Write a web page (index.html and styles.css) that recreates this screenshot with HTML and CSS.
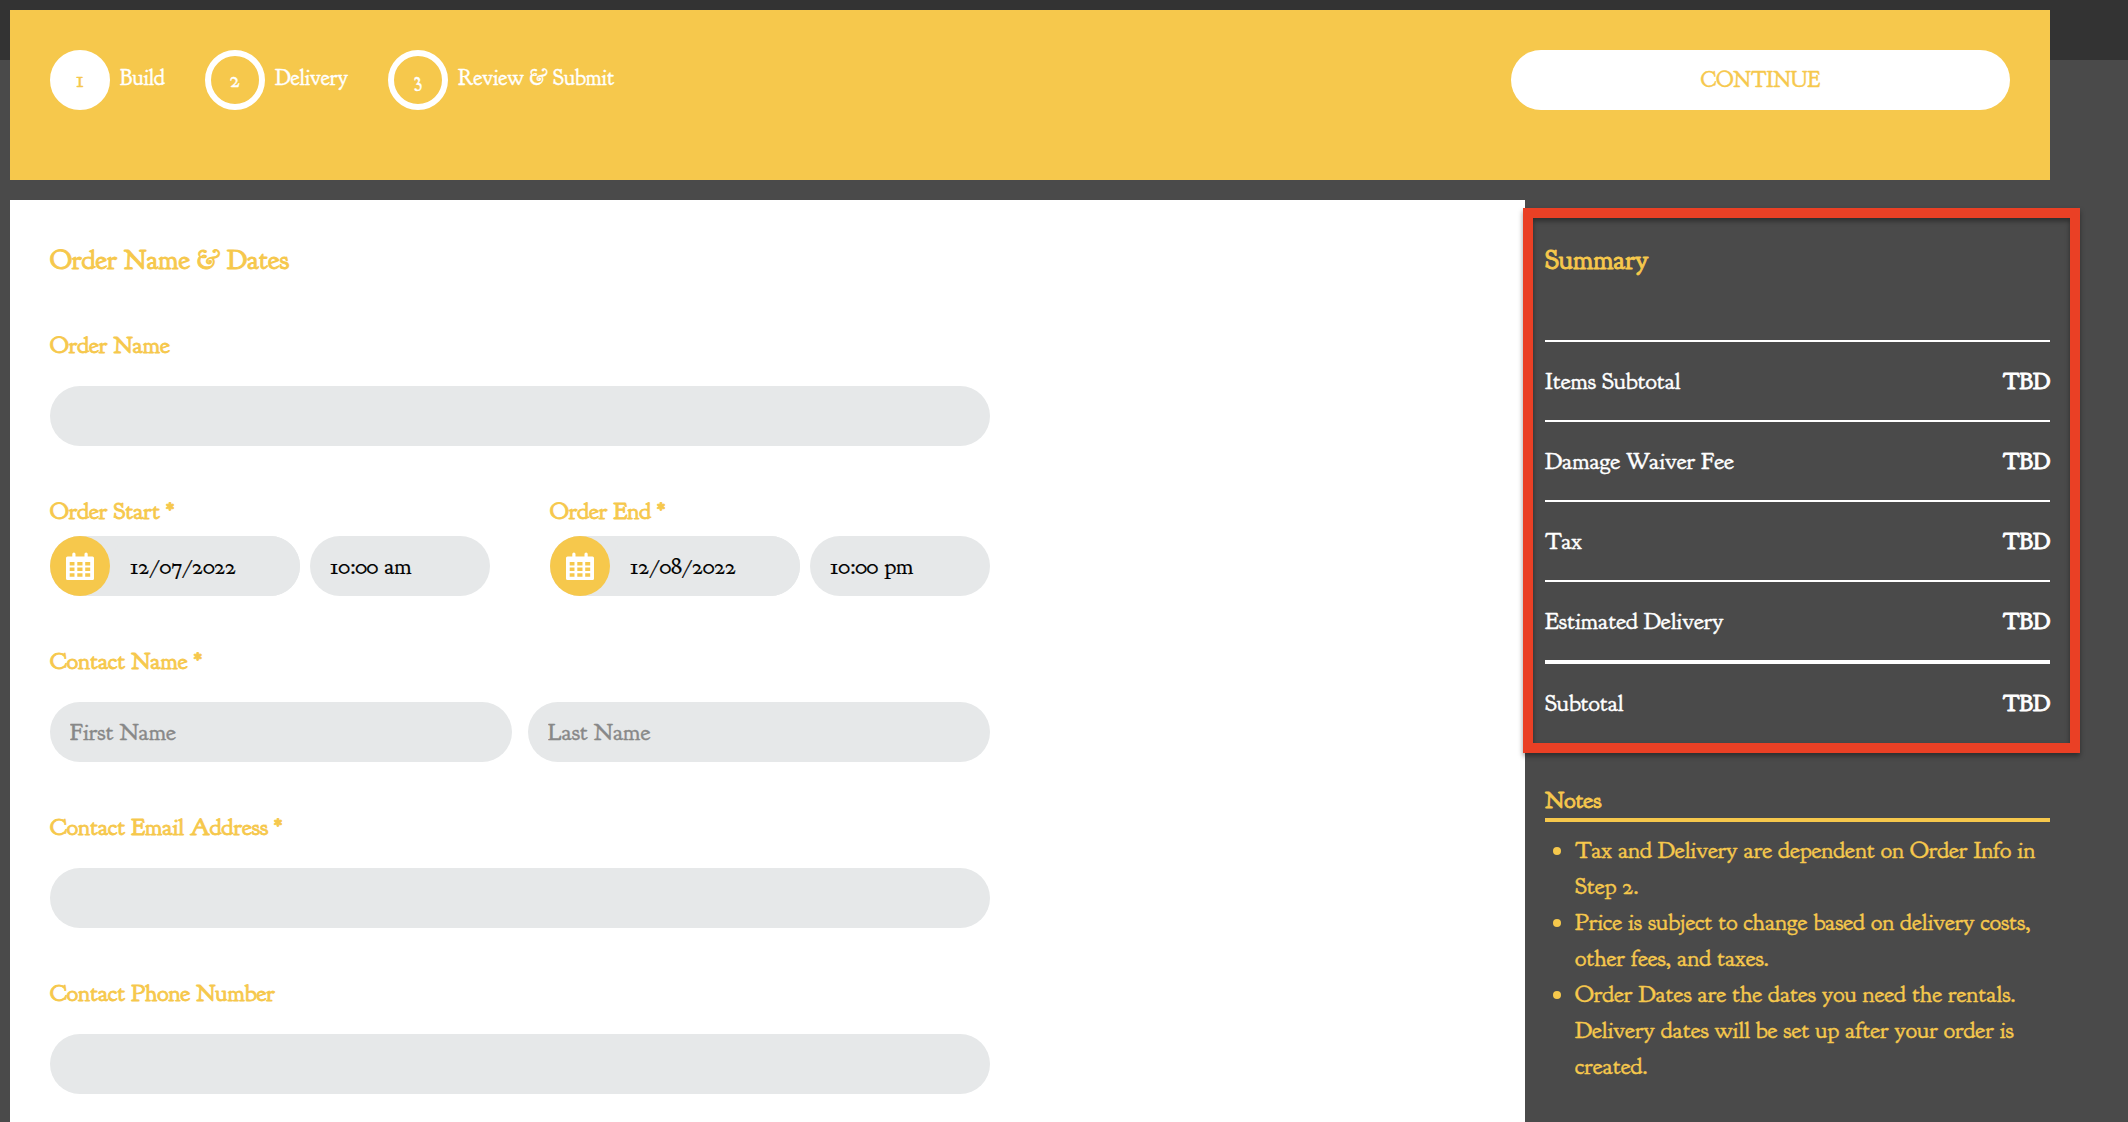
FILE: index.html
```html
<!DOCTYPE html>
<html lang="en">
<head>
    <meta charset="UTF-8">
    <meta name="viewport" content="width=device-width, initial-scale=1.0">
    <title>Build Your Order</title>
    <link rel="stylesheet" href="styles.css">
</head>
<body>
    <!-- Calendar icon, used by both date fields -->
    <svg class="sprite">
        <symbol id="calendar" viewBox="0 0 28 28">
            <path fill-rule="evenodd" d="M1.500 4.500H6.300V2a1.600 1.600 0 0 1 3.200 0V4.500H18.500V2a1.600 1.600 0 0 1 3.200 0V4.500H26.500a1.500 1.500 0 0 1 1.500 1.500V26.500a1.500 1.500 0 0 1-1.500 1.500H1.500a1.500 1.500 0 0 1-1.500-1.500V6a1.500 1.500 0 0 1 1.500-1.500zM3.700 10V13.500H8.500V10zM11.300 10V13.500H16.500V10zM19.200 10V13.500H24.200V10zM3.700 15.500V19H8.500V15.500zM11.300 15.500V19H16.500V15.500zM19.200 15.500V19H24.200V15.500zM3.700 21.300V24.700H8.500V21.300zM11.300 21.300V24.700H16.500V21.300zM19.200 21.300V24.700H24.200V21.300z"/>
        </symbol>
    </svg>

    <div class="page">
        <header class="steps-bar">
            <ol class="steps">
                <li class="step active"><span class="step-number">1</span><span class="step-name">Build</span></li>
                <li class="step"><span class="step-number">2</span><span class="step-name">Delivery</span></li>
                <li class="step"><span class="step-number">3</span><span class="step-name">Review &amp; Submit</span></li>
            </ol>
            <button class="continue-btn" type="button">CONTINUE</button>
        </header>

        <main class="content">
            <form class="order-form">
                <h2>Order Name &amp; Dates</h2>

                <div class="field">
                    <label for="orderName">Order Name</label>
                    <input id="orderName" type="text">
                </div>

                <div class="field-row dates">
                    <div class="field">
                        <label for="startDate">Order Start *</label>
                        <div class="date-time">
                            <div class="date-input">
                                <span class="date-icon"><svg><use href="#calendar"/></svg></span>
                                <input id="startDate" type="text" value="12/07/2022">
                            </div>
                            <input class="time-input" type="text" value="10:00 am">
                        </div>
                    </div>
                    <div class="field">
                        <label for="endDate">Order End *</label>
                        <div class="date-time">
                            <div class="date-input">
                                <span class="date-icon"><svg><use href="#calendar"/></svg></span>
                                <input id="endDate" type="text" value="12/08/2022">
                            </div>
                            <input class="time-input" type="text" value="10:00 pm">
                        </div>
                    </div>
                </div>

                <div class="field">
                    <label for="firstName">Contact Name *</label>
                    <div class="field-row names">
                        <input id="firstName" type="text" placeholder="First Name">
                        <input id="lastName" type="text" placeholder="Last Name">
                    </div>
                </div>

                <div class="field">
                    <label for="email">Contact Email Address *</label>
                    <input id="email" type="text">
                </div>

                <div class="field">
                    <label for="phone">Contact Phone Number</label>
                    <input id="phone" type="text">
                </div>
            </form>

            <aside class="sidebar">
                <section class="summary">
                    <h2>Summary</h2>
                    <div class="summary-row"><span>Items Subtotal</span><b>TBD</b></div>
                    <div class="summary-row"><span>Damage Waiver Fee</span><b>TBD</b></div>
                    <div class="summary-row"><span>Tax</span><b>TBD</b></div>
                    <div class="summary-row"><span>Estimated Delivery</span><b>TBD</b></div>
                    <div class="summary-row total"><span>Subtotal</span><b>TBD</b></div>
                </section>

                <section class="notes">
                    <h3>Notes</h3>
                    <ul>
                        <li>Tax and Delivery are dependent on Order Info in Step 2.</li>
                        <li>Price is subject to change based on delivery costs, other fees, and taxes.</li>
                        <li>Order Dates are the dates you need the rentals. Delivery dates will be set up after your order is created.</li>
                    </ul>
                </section>
            </aside>
        </main>
    </div>
</body>
</html>
```
FILE: styles.css
```css
*, *::after {
    box-sizing: border-box;
}
body {
    margin: 0;
    height: 100vh;
    overflow: hidden;
    background: linear-gradient(#333333 60px, #4a4a4a 60px);
    font-family: "Goudy Bookletter 1911", "Liberation Serif", serif;
    font-size: 24px;
    color: #fff;
    -webkit-text-stroke: 0.4px;
}
h2, h3, ol, ul {
    margin: 0;
    padding: 0;
    font-weight: normal;
}
.sprite {
    display: none;
}
.page {
    display: flex;
    flex-direction: column;
    width: 2050px;
    height: 100%;
    padding: 10px 0 0 10px;
}

/* Steps bar */
.steps-bar {
    display: flex;
    justify-content: space-between;
    align-items: flex-start;
    flex: none;
    height: 170px;
    margin-bottom: 20px;
    padding: 40px;
    background-color: #f6c84c;
    font-size: 22px;
}
.steps {
    display: flex;
    gap: 40px;
    list-style: none;
}
.step {
    display: flex;
    gap: 10px;
}
.step-number {
    width: 60px;
    height: 60px;
    border: 6px solid #fff;
    border-radius: 50%;
    line-height: 48px;
    text-align: center;
}
.step.active .step-number {
    background-color: #fff;
    color: #f6c84c;
}
.step-name {
    line-height: 56px;
}
.continue-btn {
    width: 499px;
    height: 60px;
    padding: 0;
    border: none;
    border-radius: 30px;
    background-color: #fff;
    color: #f6c84c;
    font: inherit;
}

/* Order form */
.content {
    display: flex;
    gap: 20px;
    flex: 1;
    min-height: 0;
}
.order-form {
    width: 1515px;
    padding: 40px;
    background-color: #fff;
    color: #f6c84c;
}
h2 {
    font-size: 28px;
    line-height: 40px;
    -webkit-text-stroke: 0.9px;
}
.field {
    width: 940px;
    margin-top: 47px;
}
label {
    display: block;
    margin-bottom: 23px;
    line-height: 36px;
    -webkit-text-stroke: 0.8px;
}
input {
    display: block;
    width: 100%;
    height: 60px;
    padding: 0 20px;
    border: none;
    border-radius: 30px;
    background-color: #e6e8e9;
    color: #000;
    font: inherit;
    -webkit-text-stroke: 0.2px;
}
input::placeholder {
    color: #888;
    -webkit-text-stroke: 0.4px;
}
.field-row {
    display: flex;
    width: 940px;
}
.names {
    gap: 16px;
}
.dates {
    gap: 60px;
}
.dates .field {
    width: 440px;
}
.dates label {
    margin-bottom: 7px;
}
.date-time {
    display: flex;
    gap: 10px;
}
.date-input {
    display: flex;
    width: 250px;
    border-radius: 30px;
    background-color: #e6e8e9;
}
.date-input input {
    flex: 1;
    min-width: 0;
}
.date-icon {
    display: flex;
    align-items: center;
    justify-content: center;
    flex: none;
    width: 60px;
    height: 60px;
    border-radius: 50%;
    background-color: #f6c84c;
}
.date-icon svg {
    width: 28px;
    height: 28px;
    fill: #fff;
}
.time-input {
    width: 180px;
}

/* Sidebar */
.sidebar {
    width: 505px;
    padding-top: 40px;
}
.summary {
    position: relative;
}
.summary h2 {
    margin-bottom: 60px;
    color: #f6c84c;
}
/* Red frame around the totals */
.summary::after {
    content: "";
    position: absolute;
    top: -32px;
    left: -22px;
    width: 557px;
    height: 545px;
    border: 10px solid #ea4025;
    box-shadow: 0 3px 5px rgba(0, 0, 0, 0.4), inset 0 3px 5px rgba(0, 0, 0, 0.4);
    pointer-events: none;
}
.summary-row {
    display: flex;
    justify-content: space-between;
    border-top: 2px solid #fff;
    line-height: 78px;
}
.summary-row b {
    font-weight: normal;
    -webkit-text-stroke: 0.9px;
}
.summary-row.total {
    border-top-width: 4px;
}
.notes {
    margin-top: 41px;
    color: #f6c84c;
}
.notes h3 {
    border-bottom: 4px solid #f6c84c;
    font-size: 24px;
    line-height: 35px;
    -webkit-text-stroke: 0.8px;
}
.notes ul {
    margin-top: 10px;
    padding-left: 30px;
    line-height: 36px;
}
```
